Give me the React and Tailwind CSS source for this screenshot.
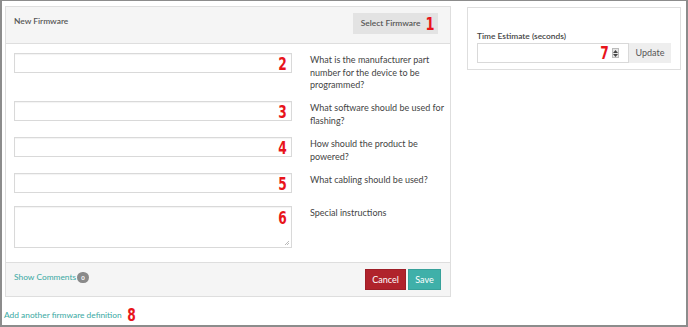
import React from "react";

const Num = ({ children, className = "" }) => (
  <span
    className={"inline-block font-black text-[#e8141b] leading-none scale-x-[0.72] origin-right " + className}
    style={{ fontFamily: '"DejaVu Sans", "Liberation Sans", sans-serif' }}
  >
    {children}
  </span>
);

function Row({ num, label, mb, textarea }) {
  return (
    <div className="flex" style={{ marginBottom: mb }}>
      <div className="w-[278px] shrink-0">
        <div
          className={
            "relative border border-[#d9d9d9] bg-white shadow-[inset_0_1px_1px_rgba(0,0,0,0.05)] " +
            (textarea ? "h-[42px]" : "h-[20px]")
          }
        >
          <Num className={"absolute right-[4px] text-[17px] " + (textarea ? "top-[3px]" : "top-[2px]")}>{num}</Num>
          {textarea && (
            <svg className="absolute right-[1px] bottom-[1px]" width="6" height="6" viewBox="0 0 6 6">
              <path d="M5 1 L1 5 M5 3 L3 5" stroke="#aaa" strokeWidth="0.8" />
            </svg>
          )}
        </div>
      </div>
      <div className="ml-[18px] w-[137px] pt-[1px] text-[9px] leading-[12.5px] text-[#444]">{label}</div>
    </div>
  );
}

export default function App() {
  return (
    <div
      className="w-[688px] h-[327px] bg-white border-2 border-t border-[#8c8c8c] text-[#444] overflow-hidden"
      style={{ fontFamily: 'Lato, "Open Sans", sans-serif' }}
    >
      <div className="flex items-start pt-[5px] pl-[3px]">
        <div>
          <div className="w-[446px] border border-[#dedede] bg-white">
            <div className="h-[37px] bg-[#f5f5f5] border-b border-[#dedede] flex items-start justify-between pl-[8px] pr-[12px]">
              <div className="pt-[8px] text-[8.4px] font-semibold text-[#555]">New Firmware</div>
              <div className="mt-[6px] h-[21px] w-[85px] bg-[#e3e3e3] flex items-center justify-end pr-[3px] gap-[2px]">
                <span className="text-[8.4px] font-semibold text-[#555]">Select Firmware</span>
                <Num className="text-[18px]">1</Num>
              </div>
            </div>
            <div className="pt-[9px] pl-[8px] pb-[14px]">
              <Row num="2" label="What is the manufacturer part number for the device to be programmed?" mb="9.5px" />
              <Row num="3" label="What software should be used for flashing?" mb="10px" />
              <Row num="4" label="How should the product be powered?" mb="10px" />
              <Row num="5" label="What cabling should be used?" mb="13px" />
              <Row num="6" label="Special instructions" mb="0px" textarea />
            </div>
            <div className="h-[34px] bg-[#f5f5f5] border-t border-[#dedede] flex items-start justify-between pl-[8px] pr-[9px]">
              <div className="flex items-center pt-[8px]">
                <span className="text-[8.4px] text-[#3aa9a3]">Show Comments</span>
                <span className="ml-[1px] h-[11px] min-w-[12px] rounded-full bg-[#8a8a8a] text-white text-[6px] font-bold flex items-center justify-center">0</span>
              </div>
              <div className="flex gap-[2px] pt-[6px]">
                <div className="h-[21px] w-[41px] bg-[#b0232c] border border-[#9e1e27] text-white text-[9px] flex items-center justify-center">Cancel</div>
                <div className="h-[21px] w-[33px] bg-[#3fb0a9] border border-[#37a19a] text-white text-[9px] flex items-center justify-center">Save</div>
              </div>
            </div>
          </div>
          <div className="mt-[10px] -ml-[1px] flex items-center gap-[2px]">
            <span className="text-[8.4px] text-[#3aa9a3]">Add another firmware definition</span>
            <Num className="text-[17px] origin-left">8</Num>
          </div>
        </div>
        <div className="ml-[16px] mt-[1px] w-[214px] h-[63px] border border-[#dedede] bg-white pl-[9px] pt-[23px]">
          <div className="text-[8.4px] font-semibold text-[#444] leading-[11px]">Time Estimate (seconds)</div>
          <div className="flex mt-[1px]">
            <div className="relative h-[20px] w-[152px] border border-[#d9d9d9] bg-white flex items-center justify-end pr-[9px] gap-[3px]">
              <Num className="text-[17px]">7</Num>
              <div className="w-[7px] h-[10px] bg-[#e6e6e6] border border-[#bbb] flex flex-col items-center justify-center gap-[1px]">
                <svg width="5" height="3" viewBox="0 0 5 3"><path d="M0 3 L2.5 0 L5 3Z" fill="#444" /></svg>
                <svg width="5" height="3" viewBox="0 0 5 3"><path d="M0 0 L2.5 3 L5 0Z" fill="#444" /></svg>
              </div>
            </div>
            <div className="h-[20px] w-[42px] bg-[#eeeeee] text-[9px] text-[#555] flex items-center justify-center">Update</div>
          </div>
        </div>
      </div>
    </div>
  );
}
